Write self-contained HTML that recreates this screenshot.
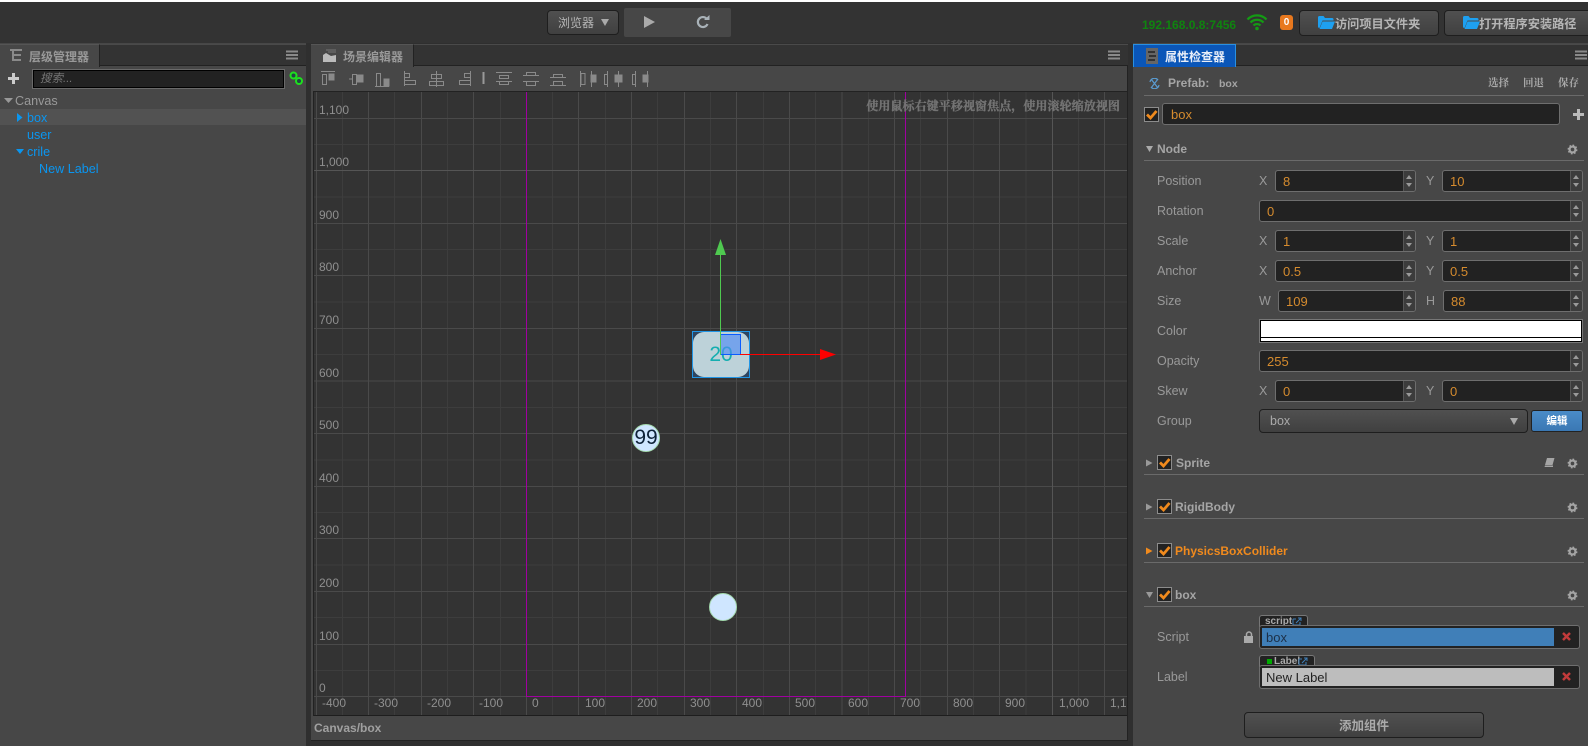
<!DOCTYPE html>
<html><head><meta charset="utf-8"><style>
*{box-sizing:border-box}
html,body{margin:0;padding:0}
body{width:1588px;height:746px;overflow:hidden;position:relative;background:#2f2f2f;font:12px/16px "Liberation Sans","Noto Sans CJK SC",sans-serif;color:#aaa}
div,span.a,svg{position:absolute}
.t{white-space:nowrap;line-height:16px}
.b{font-weight:bold}
.btn{background:linear-gradient(#505050,#404040);border:1px solid #1e1e1e;border-radius:4px;text-align:center;white-space:nowrap}
.lab{left:1157px;color:#999;font-size:12.5px;white-space:nowrap;line-height:16px;margin-top:1px}
.xy{color:#999;font-size:12.5px;line-height:16px;margin-top:1px}
.i{height:22px;background:#222;border:1px solid #6e6e6e;border-radius:3px;color:#d58b2e;font-size:13px;line-height:21px;padding-left:7px;overflow:hidden}
.i i{position:absolute;right:0;top:0;bottom:0;width:12px;background:#3c3c3c;border-left:1px solid #555}
.i i:before{content:"";position:absolute;left:2px;top:4px;border:3.5px solid transparent;border-top:0;border-bottom:4px solid #999}
.i i:after{content:"";position:absolute;left:2px;bottom:4px;border:3.5px solid transparent;border-bottom:0;border-top:4px solid #999}
.sec{left:1144px;width:440px;height:1px;background:#6a6a6a}
.ck{left:1157px;width:15px;height:15px;background:#222;border:1px solid #8c8c8c}
.tick{left:0;top:0}
.hd{font-weight:bold;font-size:12px;color:#a5a5a5;white-space:nowrap;line-height:16px}
.sx{color:#8f8f8f;font-size:12px;line-height:14px;white-space:nowrap}
.tree{font-size:12.6px;line-height:16px;color:#0a96f0;white-space:nowrap}
.srf{font-family:"Liberation Serif","Noto Serif CJK SC",serif;font-weight:bold;font-size:10.5px;color:#aaa;white-space:nowrap;line-height:14px}
</style></head><body>
<svg width="0" height="0" style="position:absolute"><defs>
<symbol id="g" viewBox="0 0 12 12"><circle cx="6" cy="6" r="3.2" fill="none" stroke="#a5a5a5" stroke-width="2.4"/><circle cx="6" cy="6" r="4.6" fill="none" stroke="#a5a5a5" stroke-width="1.6" stroke-dasharray="1.8 1.8"/></symbol>
<symbol id="c" viewBox="0 0 13 13"><path d="M2 6.500l3.500 3.500 6-7" fill="none" stroke="#f08a1d" stroke-width="2.800"/></symbol>
<symbol id="m" viewBox="0 0 12 10"><path d="M0 1.5h12M0 5h12M0 8.500h12" stroke="#8a8a8a" stroke-width="2"/></symbol>
<symbol id="f" viewBox="0 0 17 13"><path d="M0 1.500q0-1.500 1.500-1.500h4l1.500 2h7q1.500 0 1.500 1.500v1h-11l-3 7.500q-1.500 0-1.500-1.500z" fill="#1ea0f0"/><path d="M4.500 5.500h12.500l-3 7.500h-12.500z" fill="#1ea0f0"/></symbol>
</defs></svg>

<div style="left:0;top:0;width:1588px;height:2px;background:#fff"></div>
<div style="left:0;top:2px;width:1588px;height:41px;background:#333"></div>

<!-- top bar -->
<div class="btn" style="left:547px;top:10px;width:72px;height:25px;color:#b5b5b5;font-size:12px;line-height:24px;text-align:left;padding-left:10px">浏览器</div>
<svg style="left:600px;top:18px" width="10" height="9"><path d="M1 1h8l-4 7z" fill="#aaa"/></svg>
<div style="left:624px;top:8px;width:107px;height:29px;background:#474747;border-radius:2px"></div>
<svg style="left:643px;top:15px" width="13" height="14"><path d="M1 1l11 6-11 6z" fill="#aaa"/></svg>
<svg style="left:696px;top:15px" width="14" height="14"><path d="M11 4.200A5 5 0 1 0 11.500 9" fill="none" stroke="#a9b2b8" stroke-width="2.200"/><path d="M8 5h5.500V0z" fill="#a9b2b8"/></svg>
<div class="t b" style="left:1142px;top:17px;color:#0f840f;font-size:12px">192.168.0.8:7456</div>
<svg style="left:1246px;top:13px" width="22" height="18"><path d="M1.500 6.500a13 13 0 0 1 19 0M4.500 9.500a9 9 0 0 1 13 0M7.500 12.500a5 5 0 0 1 7 0" fill="none" stroke="#149a14" stroke-width="2.200"/><circle cx="11" cy="15.500" r="1.800" fill="#149a14"/></svg>
<div style="left:1280px;top:15px;width:13px;height:15px;background:#e8781e;border-radius:3px;color:#fff;font-weight:bold;font-size:10px;line-height:15px;text-align:center">0</div>
<div class="btn" style="left:1299px;top:10px;width:140px;height:26px"></div>
<svg style="left:1318px;top:16px" width="17" height="13"><use href="#f"/></svg>
<div class="t b" style="left:1335px;top:16px;color:#b5b5b5;font-size:12.200px">访问项目文件夹</div>
<div class="btn" style="left:1444px;top:10px;width:150px;height:26px"></div>
<svg style="left:1463px;top:16px" width="17" height="13"><use href="#f"/></svg>
<div class="t b" style="left:1479px;top:16px;color:#b5b5b5;font-size:12.200px">打开程序安装路径</div>

<!-- left panel -->
<div style="left:0;top:43px;width:306px;height:703px;background:#474747"></div>
<div style="left:0;top:44px;width:306px;height:22px;background:#333;border-top:1px solid #4a4a4a;border-bottom:1px solid #222"></div>
<div style="left:0;top:44px;width:100px;height:23px;background:#474747;border-top:1px solid #555;border-right:1px solid #222"></div>
<svg style="left:10px;top:49px" width="13" height="14"><path d="M0 1h12M3 1v11M3 6h8M3 11h8" stroke="#8a8a8a" stroke-width="2" fill="none"/></svg>
<div class="t b" style="left:29px;top:49px;color:#999;font-size:12px;line-height:16px">层级管理器</div>
<svg style="left:286px;top:50px" width="12" height="10"><use href="#m"/></svg>
<svg style="left:8px;top:73px" width="11" height="11"><path d="M5.500 0v11M0 5.500h11" stroke="#ccc" stroke-width="3"/></svg>
<div style="left:32px;top:69px;width:253px;height:20px;background:#222;border:1px solid #6a6a6a;outline:0;box-shadow:inset 0 0 0 1px #000;padding-left:7px;font-style:italic;color:#777;font-size:11.500px;line-height:18px">搜索...</div>
<svg style="left:289px;top:71px" width="15" height="15"><circle cx="4.500" cy="4.500" r="3" fill="#244" stroke="#1ee01e" stroke-width="2"/><circle cx="10" cy="10" r="3" fill="#244" stroke="#1ee01e" stroke-width="2"/></svg>
<div style="left:0;top:109px;width:306px;height:16px;background:#525252"></div>
<svg style="left:4px;top:98px" width="9" height="6"><path d="M0 0h9l-4.500 5z" fill="#999"/></svg>
<div class="t" style="left:15px;top:93px;font-size:12.600px;color:#999">Canvas</div>
<svg style="left:17px;top:113px" width="6" height="9"><path d="M0 0l5.500 4.500-5.500 4.500z" fill="#0a96f0"/></svg>
<div class="tree" style="left:27px;top:110px">box</div>
<div class="tree" style="left:27px;top:127px">user</div>
<svg style="left:16px;top:149px" width="9" height="6"><path d="M0 0h8l-4 5z" fill="#0a96f0"/></svg>
<div class="tree" style="left:27px;top:144px">crile</div>
<div class="tree" style="left:39px;top:161px">New Label</div>

<!-- scene panel -->
<div style="left:311px;top:44px;width:817px;height:697px;background:#474747;border-right:1px solid #222;border-bottom:1px solid #222"></div>
<div style="left:311px;top:44px;width:817px;height:22px;background:#333;border-top:1px solid #4a4a4a;border-bottom:1px solid #222"></div>
<div style="left:311px;top:44px;width:103px;height:23px;background:#474747;border-top:1px solid #555;border-right:1px solid #222"></div>
<svg style="left:323px;top:49px" width="14" height="14"><path d="M0 13V6l3-2 5 3 5-1v7z" fill="#bbb"/><path d="M3 1h10M5 3h8" stroke="#666" stroke-width="1.500"/></svg>
<div class="t b" style="left:343px;top:49px;color:#999;font-size:12px">场景编辑器</div>
<svg style="left:1108px;top:50px" width="12" height="10"><use href="#m"/></svg>

<!-- toolbar icons -->
<svg style="left:311px;top:66px" width="400" height="25">
<g fill="none" stroke="#8a8a8a" stroke-width="1">
<path d="M10 5.500h14M11.500 8.500h4v10h-4z"/><path d="M18 8h5v6h-5z" fill="#8a8a8a"/>
<path d="M38 13h3M48 13h2M41.500 8.500h4v10h-4z"/><path d="M46 9h6v7h-6z" fill="#8a8a8a"/>
<path d="M64 20.500h14M65.500 7.500h4v13h-4z"/><path d="M73 13h5v7h-5z" fill="#8a8a8a"/>
<path d="M93.500 5v15M93.500 7.500h5v4h-5zM93.500 14.500h11v4h-11z"/>
<path d="M125.500 5v16M120.500 8.500h10v4h-10zM118.500 15.500h14v4h-14z"/>
<path d="M159.500 5v15M153.500 7.500h6v4h-6zM148.500 14.500h11v4h-11z"/>
</g>
<path d="M172.500 6v12" stroke="#999" stroke-width="2"/>
<g fill="none" stroke="#8a8a8a" stroke-width="1">
<path d="M185 6.500h16M188.500 9.500h9v3h-9zM185 15.500h16M188.500 15.500h9v3h-9z"/>
<path d="M212 9.500h16M215.500 6.500h9v3h-9zM212 15.500h16M215.500 15.500h9v4h-9z"/>
<path d="M239 11.500h16M242.500 8.500h9v3h-9zM239 19.500h16M242.500 15.500h9v4h-9z"/>
<path d="M269.500 5v16M270 7.500h4v11h-4zM280.500 5v16"/><path d="M280 9h5v7h-5z" fill="#8a8a8a"/>
<path d="M296.500 5v16M293.500 8.500h3v10h-3zM307.500 5v16"/><path d="M304 9h7v7h-7z" fill="#8a8a8a"/>
<path d="M324.500 5v16M321.500 8.500h3v10h-3zM336.500 5v16"/><path d="M332 9h5v7h-5z" fill="#8a8a8a"/>
</g>
</svg>

<!-- scene -->
<div style="left:313px;top:91px;width:814px;height:625px;background:#333;border-top:1px solid #222;border-left:1px solid #222;border-bottom:1px solid #1e1e1e"></div>
<svg style="left:0;top:0" width="1588" height="746">
<g stroke="#3d3d3d" stroke-width="1" fill="none">
<path d="M342.500 92V715M394.500 92V715M447.500 92V715M500.500 92V715M552.500 92V715M605.500 92V715M657.500 92V715M710.500 92V715M763.500 92V715M815.500 92V715M868.500 92V715M920.500 92V715M973.500 92V715M1026 92V715M1078.500 92V715"/>
<path d="M314 144.500H1127M314 197H1127M314 249.500H1127M314 302H1127M314 354.500H1127M314 407.500H1127M314 460H1127M314 512.500H1127M314 565H1127M314 617.500H1127M314 670.500H1127"/>
</g>
<g stroke="#4a4a4a" stroke-width="1" fill="none">
<path d="M316.500 92V715M368.500 92V715M421.500 92V715M473.500 92V715M526.500 92V715M578.500 92V715M631.500 92V715M684.500 92V715M736.500 92V715M789.500 92V715M842 92V715M894.500 92V715M947.500 92V715M999.500 92V715M1104.500 92V715"/>
<path d="M314 118.500H1127M314 223.500H1127M314 275.500H1127M314 328.500H1127M314 381H1127M314 433.500H1127M314 486.500H1127M314 538.500H1127M314 591.500H1127M314 644.500H1127M314 696.500H1127"/>
</g>
<path d="M1052.500 92V715M314 170.500H1127" stroke="#555" fill="none"/>
<path d="M526.500 92V696.500H905.500V92" fill="none" stroke="#a000a0" stroke-width="1"/>
</svg>

<!-- y labels -->
<div class="sx" style="left:319px;top:103px">1,100</div>
<div class="sx" style="left:319px;top:155px">1,000</div>
<div class="sx" style="left:319px;top:208px">900</div>
<div class="sx" style="left:319px;top:260px">800</div>
<div class="sx" style="left:319px;top:313px">700</div>
<div class="sx" style="left:319px;top:366px">600</div>
<div class="sx" style="left:319px;top:418px">500</div>
<div class="sx" style="left:319px;top:471px">400</div>
<div class="sx" style="left:319px;top:523px">300</div>
<div class="sx" style="left:319px;top:576px">200</div>
<div class="sx" style="left:319px;top:629px">100</div>
<div class="sx" style="left:319px;top:681px">0</div>
<!-- x labels -->
<div class="sx" style="left:322px;top:696px">-400</div>
<div class="sx" style="left:374px;top:696px">-300</div>
<div class="sx" style="left:427px;top:696px">-200</div>
<div class="sx" style="left:479px;top:696px">-100</div>
<div class="sx" style="left:532px;top:696px">0</div>
<div class="sx" style="left:585px;top:696px">100</div>
<div class="sx" style="left:637px;top:696px">200</div>
<div class="sx" style="left:690px;top:696px">300</div>
<div class="sx" style="left:742px;top:696px">400</div>
<div class="sx" style="left:795px;top:696px">500</div>
<div class="sx" style="left:848px;top:696px">600</div>
<div class="sx" style="left:900px;top:696px">700</div>
<div class="sx" style="left:953px;top:696px">800</div>
<div class="sx" style="left:1005px;top:696px">900</div>
<div class="sx" style="left:1059px;top:696px">1,000</div>
<div style="left:1110px;top:696px;width:16px;overflow:hidden" class="sx">1,100</div>
<div class="srf" style="right:468px;top:99px;font-size:12px;letter-spacing:.08px;color:#747474;-webkit-text-stroke:.35px #747474">使用鼠标右键平移视窗焦点，使用滚轮缩放视图</div>

<!-- circles -->
<div style="left:632px;top:424px;width:28px;height:28px;border-radius:50%;background:#cfe6ff;border:1px solid #a3d9ad;color:#0d2238;font-size:21px;line-height:26px;text-align:center">99</div>
<div style="left:709px;top:593px;width:28px;height:28px;border-radius:50%;background:#cfe6ff;border:1px solid #a3d9ad"></div>

<!-- selected node -->
<div style="left:692px;top:331px;width:58px;height:47px;background:#2e4560;border:1px solid #2196e6"></div>
<div style="left:693px;top:332px;width:56px;height:45px;background:#bdd2d9;border-radius:11px"></div>
<div style="left:693px;top:343px;width:56px;text-align:center;color:#14aeb0;font-size:21px;line-height:24px">20</div>
<div style="left:720px;top:334px;width:21px;height:21px;background:rgba(80,140,245,.65);border:1px solid #0a5cff"></div>
<svg style="left:700px;top:230px" width="150" height="135">
<path d="M20.500 25V125" stroke="#4fc950"/><path d="M20.500 9l5.500 16h-11z" fill="#4fc950"/>
<path d="M40 124.500H120" stroke="#f00"/><path d="M120 119l16 5.500-16 5.500z" fill="#f00"/>
</svg>

<!-- status -->
<div class="t b" style="left:314px;top:720px;color:#a0a0a0;font-size:12px">Canvas/box</div>

<!-- inspector -->
<div style="left:1133px;top:43px;width:455px;height:703px;background:#474747"></div>
<div style="left:1133px;top:44px;width:455px;height:22px;background:#333;border-top:1px solid #4a4a4a;border-bottom:1px solid #222"></div>
<div style="left:1133px;top:44px;width:103px;height:23px;background:#0a56b8;border-top:1px solid #2a90e0;border-left:1px solid #2a90e0;border-right:1px solid #2a90e0"></div>
<svg style="left:1146px;top:48px" width="12" height="16"><rect width="12" height="16" fill="#666"/><path d="M2 4h7M3 8h7M2 12h7" stroke="#222" stroke-width="1.500"/></svg>
<div class="t b" style="left:1165px;top:49px;color:#e8eef8;font-size:12px">属性检查器</div>
<svg style="left:1575px;top:50px" width="12" height="10"><use href="#m"/></svg>

<svg style="left:1149px;top:78px" width="11" height="11"><path d="M1 4a4.500 4.500 0 0 1 8-2M10 7a4.500 4.500 0 0 1-8 2M2 1l7 9M9 1l-7 9" fill="none" stroke="#5a9bd0" stroke-width="1.200"/></svg>
<div class="t b" style="left:1168px;top:75px;color:#a5a5a5;font-size:12px">Prefab:</div>
<div class="t b" style="left:1219px;top:76px;color:#a5a5a5;font-size:10.500px">box</div>
<div class="srf" style="left:1488px;top:77px">选择</div>
<div class="srf" style="left:1523px;top:77px">回退</div>
<div class="srf" style="left:1558px;top:77px">保存</div>
<div class="sec" style="top:95px"></div>

<div class="ck" style="left:1144px;top:107px"><svg class="tick" width="13" height="13"><use href="#c"/></svg></div>
<div class="i" style="left:1162px;top:103px;width:398px;padding-left:8px">box</div>
<svg style="left:1573px;top:109px" width="11" height="11"><path d="M5.500 0v11M0 5.500h11" stroke="#bbb" stroke-width="3"/></svg>

<svg style="left:1146px;top:145px" width="8" height="8"><path d="M0 1h7l-3.500 6z" fill="#aaa"/></svg>
<div class="hd" style="left:1157px;top:141px">Node</div>
<svg style="left:1567px;top:144px" width="11" height="11"><use href="#g"/></svg>
<div class="sec" style="top:160px"></div>

<div class="lab" style="top:172px">Position</div>
<div class="xy" style="left:1259px;top:172px">X</div><div class="i" style="left:1275px;top:170px;width:141px">8<i></i></div>
<div class="xy" style="left:1426px;top:172px">Y</div><div class="i" style="left:1442px;top:170px;width:141px">10<i></i></div>

<div class="lab" style="top:202px">Rotation</div>
<div class="i" style="left:1259px;top:200px;width:324px">0<i></i></div>

<div class="lab" style="top:232px">Scale</div>
<div class="xy" style="left:1259px;top:232px">X</div><div class="i" style="left:1275px;top:230px;width:141px">1<i></i></div>
<div class="xy" style="left:1426px;top:232px">Y</div><div class="i" style="left:1442px;top:230px;width:141px">1<i></i></div>

<div class="lab" style="top:262px">Anchor</div>
<div class="xy" style="left:1259px;top:262px">X</div><div class="i" style="left:1275px;top:260px;width:141px">0.5<i></i></div>
<div class="xy" style="left:1426px;top:262px">Y</div><div class="i" style="left:1442px;top:260px;width:141px">0.5<i></i></div>

<div class="lab" style="top:292px">Size</div>
<div class="xy" style="left:1259px;top:292px">W</div><div class="i" style="left:1278px;top:290px;width:138px">109<i></i></div>
<div class="xy" style="left:1426px;top:292px">H</div><div class="i" style="left:1443px;top:290px;width:140px">88<i></i></div>

<div class="lab" style="top:322px">Color</div>
<div style="left:1259px;top:319px;width:324px;height:24px;background:#fff;border:1px solid #777;box-shadow:inset 0 0 0 1px #000"></div>
<div style="left:1260px;top:337px;width:322px;height:1px;background:#000"></div>

<div class="lab" style="top:352px">Opacity</div>
<div class="i" style="left:1259px;top:350px;width:324px">255<i></i></div>

<div class="lab" style="top:382px">Skew</div>
<div class="xy" style="left:1259px;top:382px">X</div><div class="i" style="left:1275px;top:380px;width:141px">0<i></i></div>
<div class="xy" style="left:1426px;top:382px">Y</div><div class="i" style="left:1442px;top:380px;width:141px">0<i></i></div>

<div class="lab" style="top:412px">Group</div>
<div class="btn" style="left:1259px;top:409px;width:269px;height:24px;text-align:left;padding-left:10px;font-size:12.500px;line-height:22px;color:#aaa">box</div>
<svg style="left:1509px;top:417px" width="10" height="9"><path d="M1 1h8l-4 7z" fill="#aaa"/></svg>
<div style="left:1531px;top:410px;width:52px;height:22px;background:linear-gradient(#4a8cc8,#3a78b4);border:1px solid #222;border-radius:3px;color:#fff;text-align:center;font-weight:bold;font-size:10.500px;line-height:20px">编辑</div>

<!-- sprite -->
<svg style="left:1146px;top:459px" width="8" height="8"><path d="M0 .5l6.500 3.500-6.500 3.500z" fill="#999"/></svg>
<div class="ck" style="top:455px"><svg class="tick" width="13" height="13"><use href="#c"/></svg></div>
<div class="hd" style="left:1176px;top:455px">Sprite</div>
<svg style="left:1544px;top:457px" width="11" height="11"><path d="M3 1h7.500l-2 7H1z" fill="#a5a5a5"/><path d="M1 8.500h8v1.500H.5z" fill="#a5a5a5"/></svg>
<svg style="left:1567px;top:458px" width="11" height="11"><use href="#g"/></svg>
<div class="sec" style="top:474px"></div>

<!-- rigidbody -->
<svg style="left:1146px;top:503px" width="8" height="8"><path d="M0 .5l6.500 3.500-6.500 3.500z" fill="#999"/></svg>
<div class="ck" style="top:499px"><svg class="tick" width="13" height="13"><use href="#c"/></svg></div>
<div class="hd" style="left:1175px;top:499px">RigidBody</div>
<svg style="left:1567px;top:502px" width="11" height="11"><use href="#g"/></svg>
<div class="sec" style="top:518px"></div>

<!-- physics -->
<svg style="left:1146px;top:547px" width="8" height="8"><path d="M0 .5l6.500 3.500-6.500 3.500z" fill="#f08a1d"/></svg>
<div class="ck" style="top:543px"><svg class="tick" width="13" height="13"><use href="#c"/></svg></div>
<div class="hd" style="left:1175px;top:543px;color:#f08a1d">PhysicsBoxCollider</div>
<svg style="left:1567px;top:546px" width="11" height="11"><use href="#g"/></svg>
<div class="sec" style="top:562px"></div>

<!-- box -->
<svg style="left:1146px;top:591px" width="8" height="8"><path d="M0 1h7l-3.500 6z" fill="#999"/></svg>
<div class="ck" style="top:587px"><svg class="tick" width="13" height="13"><use href="#c"/></svg></div>
<div class="hd" style="left:1175px;top:587px">box</div>
<svg style="left:1567px;top:590px" width="11" height="11"><use href="#g"/></svg>
<div class="sec" style="top:606px"></div>

<div class="lab" style="top:628px">Script</div>
<svg style="left:1244px;top:631px" width="10" height="12"><path d="M2.500 5V3.500a2.500 2.500 0 0 1 5 0V5" fill="none" stroke="#aaa" stroke-width="1.500"/><rect y="5" width="9" height="7" fill="#aaa"/></svg>
<div style="left:1259px;top:615px;width:49px;height:12px;background:#222;border:1px solid #777;border-bottom:0;border-radius:3px 3px 0 0;color:#aaa;font-size:10px;line-height:11px;padding-left:5px;font-weight:bold">script</div>
<svg style="left:1292px;top:617px" width="10" height="9"><path d="M1 2h3M1 2v6h7V5M4 6l5-5M6 1h3v3" fill="none" stroke="#3f7fb8"/></svg>
<div style="left:1259px;top:625px;width:321px;height:24px;background:#222;border:1px solid #6e6e6e;border-radius:3px"></div>
<div style="left:1262px;top:628px;width:292px;height:18px;background:#407fb8;color:#1c3048;font-size:13px;line-height:19px;padding-left:4px">box</div>
<svg style="left:1562px;top:632px" width="9" height="9"><path d="M1 1l7 7M8 1l-7 7" stroke="#c23b3b" stroke-width="2.500"/></svg>

<div class="lab" style="top:668px">Label</div>
<div style="left:1259px;top:655px;width:56px;height:12px;background:#222;border:1px solid #777;border-bottom:0;border-radius:3px 3px 0 0;color:#aaa;font-size:10px;line-height:11px;padding-left:14px;font-weight:bold">Label</div>
<div style="left:1267px;top:659px;width:5px;height:5px;background:#0a0"></div>
<svg style="left:1298px;top:657px" width="10" height="9"><path d="M1 2h3M1 2v6h7V5M4 6l5-5M6 1h3v3" fill="none" stroke="#3f7fb8"/></svg>
<div style="left:1259px;top:665px;width:321px;height:24px;background:#222;border:1px solid #6e6e6e;border-radius:3px"></div>
<div style="left:1262px;top:668px;width:292px;height:18px;background:#bdbdbd;color:#222;font-size:13px;line-height:19px;padding-left:4px">New Label</div>
<svg style="left:1562px;top:672px" width="9" height="9"><path d="M1 1l7 7M8 1l-7 7" stroke="#c23b3b" stroke-width="2.500"/></svg>

<div class="btn" style="left:1244px;top:712px;width:240px;height:26px;color:#aaa;font-weight:bold;font-size:12.500px;line-height:27px">添加组件</div>
</body></html>
